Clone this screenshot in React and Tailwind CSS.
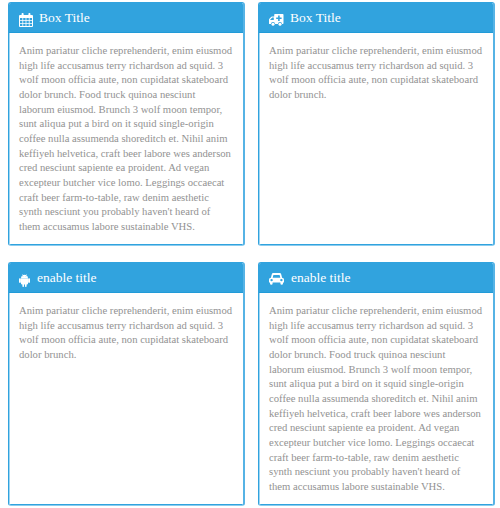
const LONG = [
  "Anim pariatur cliche reprehenderit, enim eiusmod",
  "high life accusamus terry richardson ad squid. 3",
  "wolf moon officia aute, non cupidatat skateboard",
  "dolor brunch. Food truck quinoa nesciunt",
  "laborum eiusmod. Brunch 3 wolf moon tempor,",
  "sunt aliqua put a bird on it squid single-origin",
  "coffee nulla assumenda shoreditch et. Nihil anim",
  "keffiyeh helvetica, craft beer labore wes anderson",
  "cred nesciunt sapiente ea proident. Ad vegan",
  "excepteur butcher vice lomo. Leggings occaecat",
  "craft beer farm-to-table, raw denim aesthetic",
  "synth nesciunt you probably haven't heard of",
  "them accusamus labore sustainable VHS.",
];
const SHORT = [...LONG.slice(0, 3), "dolor brunch."];

function CalendarIcon() {
  return (
    <svg className="mt-[4px] h-[14px] w-[14px]" viewBox="0 0 14 14" fill="currentColor">
      <path fillRule="evenodd" d="M1 2h12q1 0 1 1v10q0 1-1 1H1q-1 0-1-1V3q0-1 1-1zM1 5v2.2h2.4V5zm3.2 0v2.2h2.4V5zm3.2 0v2.2h2.4V5zm3.2 0v2.2H13V5zM1 8v2.2h2.4V8zm3.2 0v2.2h2.4V8zm3.2 0v2.2h2.4V8zm3.2 0v2.2H13V8zM1 11v2h2.4v-2zm3.2 0v2h2.4v-2zm3.2 0v2h2.4v-2zm3.2 0v2H13v-2z" />
      <rect x="2.6" y="0" width="2" height="3.8" rx="0.8" />
      <rect x="9.4" y="0" width="2" height="3.8" rx="0.8" />
    </svg>
  );
}

function AmbulanceIcon() {
  return (
    <svg className="mt-[3px] h-[12px] w-[15px]" viewBox="0 0 15 12" fill="currentColor">
      <path fillRule="evenodd" d="M6 0h7.700q.8 0 .8.8v8.500q0 .7-.7.7H13a2 2 0 0 0-4 0H6a2 2 0 0 0-4 0H.6Q0 10 0 9.400V5.600q0-.5.400-.9l1.900-1.900q.4-.4.9-.4h2V.7Q5.200 0 6 0zM1.300 6h3.500V3.600H3.300L1.300 5.500zM9.100 1.500v1.900H7.200v1.600h1.900v1.900h1.600V5h1.900V3.400h-1.900V1.500z" />
      <circle cx="4" cy="10.300" r="1.500" />
      <circle cx="11" cy="10.300" r="1.500" />
    </svg>
  );
}

function AndroidIcon() {
  return (
    <svg className="mt-[4px] h-[13px] w-[11px]" viewBox="0 0 11 13" fill="currentColor">
      <path fillRule="evenodd" d="M2 4Q2.100 2 3.900 1.200L3.300.2l.3-.2.6 1.100Q5.500.6 6.800 1.100L7.400 0l.3.2-.6 1Q8.900 2 9 4zM3.700 2.300v.5h.5v-.5zm3 0v.5h.5v-.5z" />
      <path d="M2 4.200h7v5.400q0 .8-.8.8h-.6v1.800a.8.8 0 0 1-1.600 0v-1.800H5v1.800a.8.8 0 0 1-1.600 0v-1.800h-.6q-.8 0-.8-.8z" />
      <rect x="0" y="4.200" width="1.900" height="4.700" rx="0.800" />
      <rect x="9.100" y="4.200" width="1.900" height="4.700" rx="0.800" />
    </svg>
  );
}

function CarIcon() {
  return (
    <svg className="mt-[2px] h-[12px] w-[15px]" viewBox="0 0 15 12" fill="currentColor">
      <path fillRule="evenodd" d="M4.300 0h6.400q1.200 0 1.500 1.200l.9 3.500Q15 4.900 15 6.500V9.500h-1v1a1.300 1.300 0 0 1-2.600 0v-1H3.600v1a1.300 1.300 0 0 1-2.600 0v-1H0v-3Q0 4.900 1.900 4.700l.9-3.500Q3.100 0 4.300 0zM3.700 4.700h7.600l-.7-2.800H4.400zM2.600 5.900a1.200 1.200 0 1 0 0 2.400 1.200 1.200 0 0 0 0-2.400zM12.400 5.900a1.200 1.200 0 1 0 0 2.400 1.200 1.200 0 0 0 0-2.400z" />
    </svg>
  );
}

function Box({ title, icon, lines, gap }) {
  return (
    <section className="flex h-[244px] w-[237px] flex-col overflow-hidden rounded-[3px] border-y border-l border-r-2 border-[#31a3de] border-r-[#56b3e5] border-b-[#8accef] bg-white">
      <header className="flex h-[30px] shrink-0 items-center border-b border-[#219bd8] bg-[#31a3de] pl-[10px] pt-px text-[13.5px] leading-[27px] text-white">
        {icon}
        <span className={gap + " -mt-[2px]"}>{title}</span>
      </header>
      <div className="flex-1 border-b border-l border-b-[#31a3de] border-l-[#a0d6f2] pl-[9px] pt-[10px] text-[10.67px] leading-[14.67px] text-[#929292]">
        {lines.map((l) => (
          <span key={l} className="block whitespace-nowrap">{l}</span>
        ))}
      </div>
    </section>
  );
}

export default function App() {
  return (
    <main className="grid h-[508px] w-[500px] grid-cols-[237px_237px] content-start gap-x-[13px] gap-y-[16px] bg-white pl-2 pt-[2px] font-['Liberation_Serif',serif]">
      <Box title="Box Title" icon={<CalendarIcon />} gap="ml-[6px]" lines={LONG} />
      <Box title="Box Title" icon={<AmbulanceIcon />} gap="ml-[6px]" lines={SHORT} />
      <Box title="enable title" icon={<AndroidIcon />} gap="ml-[7px]" lines={SHORT} />
      <Box title="enable title" icon={<CarIcon />} gap="ml-[7px]" lines={LONG} />
    </main>
  );
}
